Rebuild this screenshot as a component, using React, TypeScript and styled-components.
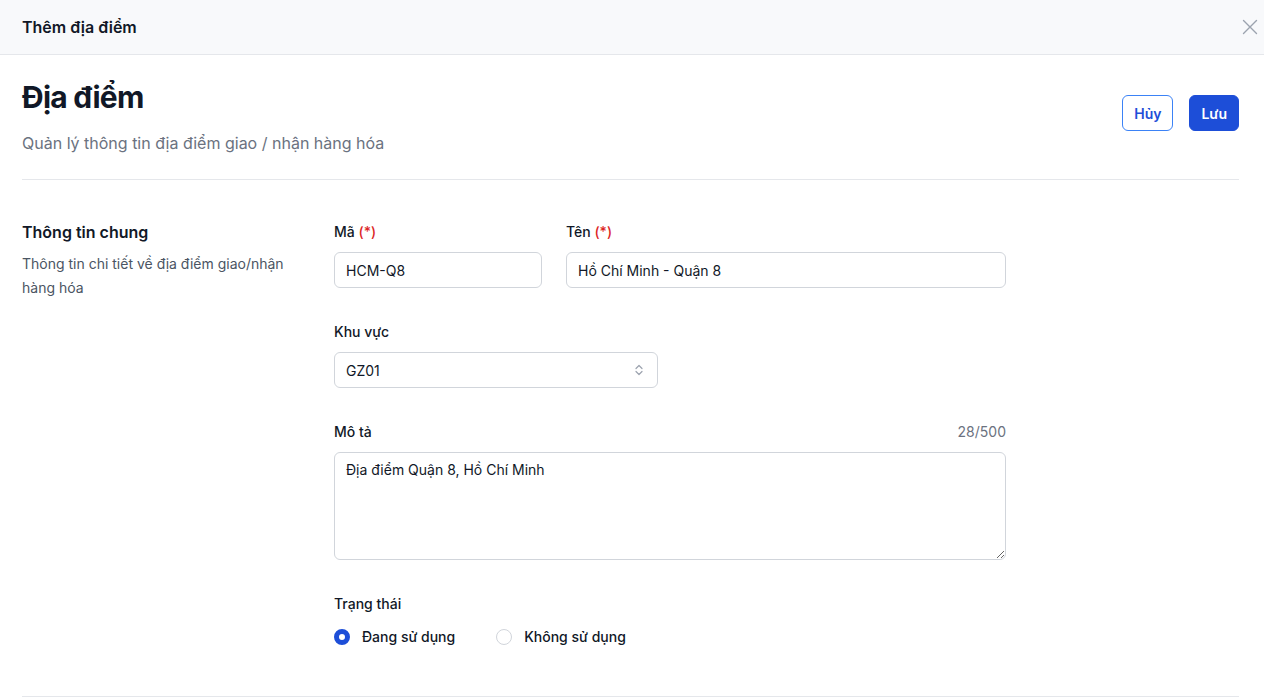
import React from "react";
import styled, { createGlobalStyle } from "styled-components";

const Global = createGlobalStyle`
  html, body { margin: 0; padding: 0; background: #ffffff; }
  body { font-family: Inter, "Noto Sans", sans-serif; color: #111827; }
  * { box-sizing: border-box; }
`;

const Page = styled.div`
  width: 1264px;
  height: 697px;
  overflow: hidden;
  background: #fff;
`;

const TopBar = styled.header`
  height: 55px;
  background: #f8f9fb;
  border-bottom: 1px solid #e5e7eb;
  display: flex;
  align-items: center;
  justify-content: space-between;
  padding: 0 5px 0 22px;
`;

const TopTitle = styled.h2`
  margin: 0;
  font-size: 16px;
  font-weight: 600;
  color: #111827;
`;

const CloseBtn = styled.button`
  width: 18px;
  height: 18px;
  border: none;
  background: transparent;
  padding: 0;
  display: flex;
  align-items: center;
  justify-content: center;
  color: #9ca3af;
  cursor: pointer;
`;

const Body = styled.main`
  padding: 0 25px 0 22px;
`;

const Head = styled.section`
  display: flex;
  justify-content: space-between;
  align-items: flex-start;
  padding: 24px 0 24px;
  border-bottom: 1px solid #e5e7eb;
`;

const Title = styled.h1`
  margin: 0;
  font-size: 30px;
  line-height: 36px;
  font-weight: 700;
  color: #111827;
  letter-spacing: -0.75px;
`;

const Subtitle = styled.p`
  margin: 16px 0 0;
  font-size: 16px;
  line-height: 24px;
  color: #6b7280;
`;

const Actions = styled.div`
  display: flex;
  gap: 16px;
  margin-top: 16px;
`;

const Button = styled.button<{ $primary?: boolean }>`
  height: 36px;
  padding: 0 11px;
  border-radius: 6px;
  font-family: inherit;
  font-size: 14px;
  font-weight: 600;
  cursor: pointer;
  border: 1px solid ${(p) => (p.$primary ? "#1d4ed8" : "#3b82f6")};
  background: ${(p) => (p.$primary ? "#1d4ed8" : "#ffffff")};
  color: ${(p) => (p.$primary ? "#ffffff" : "#1d4ed8")};
`;

const Section = styled.section`
  display: grid;
  grid-template-columns: 280px 672px;
  column-gap: 32px;
  padding: 42px 0 0;
  height: 517px;
  border-bottom: 1px solid #e5e7eb;
`;

const SectionTitle = styled.h3`
  margin: 0;
  font-size: 16px;
  line-height: 20px;
  font-weight: 600;
  color: #111827;
`;

const SectionDesc = styled.p`
  margin: 10px 0 0;
  font-size: 14px;
  line-height: 24px;
  color: #4b5563;
`;

const Form = styled.div`
  display: flex;
  flex-direction: column;
  gap: 34px;
`;

const Row = styled.div<{ $cols?: number }>`
  display: grid;
  grid-template-columns: repeat(${(p) => p.$cols ?? 3}, 1fr);
  column-gap: 24px;
`;

const Field = styled.div<{ $span?: number }>`
  grid-column: span ${(p) => p.$span ?? 1};
  display: flex;
  flex-direction: column;
`;

const LabelLine = styled.div`
  display: flex;
  justify-content: space-between;
  margin-bottom: 10px;
`;

const Label = styled.label`
  font-size: 14px;
  line-height: 20px;
  font-weight: 500;
  color: #111827;
`;

const Req = styled.span`
  color: #dc2626;
`;

const Counter = styled.span`
  font-size: 14px;
  line-height: 20px;
  color: #6b7280;
`;

const Input = styled.input`
  height: 36px;
  width: 100%;
  border: 1px solid #d1d5db;
  border-radius: 6px;
  padding: 0 12px 0 11px;
  font-family: inherit;
  font-size: 14px;
  color: #111827;
  background: #fff;
  outline: none;
`;

const SelectBox = styled.div`
  height: 36px;
  border: 1px solid #d1d5db;
  border-radius: 6px;
  padding: 0 12px 0 11px;
  display: flex;
  align-items: center;
  justify-content: space-between;
  font-size: 14px;
  color: #111827;
`;

const TextArea = styled.textarea`
  height: 108px;
  width: 100%;
  border: 1px solid #d1d5db;
  border-radius: 6px;
  padding: 7px 12px 8px 11px;
  font-family: inherit;
  font-size: 14px;
  line-height: 20px;
  color: #111827;
  resize: vertical;
  outline: none;
`;

const Radios = styled.div`
  display: flex;
  gap: 41px;
  margin-top: 4px;
`;

const RadioItem = styled.label`
  display: flex;
  align-items: center;
  gap: 12px;
  font-size: 14px;
  font-weight: 500;
  color: #111827;
`;

const RadioDot = styled.span<{ $on?: boolean }>`
  width: 16px;
  height: 16px;
  border-radius: 50%;
  border: ${(p) => (p.$on ? "5px solid #1d4ed8" : "1px solid #d1d5db")};
  background: #fff;
`;

export default function App() {
  return (
    <Page>
      <Global />
      <TopBar>
        <TopTitle>Thêm địa điểm</TopTitle>
        <CloseBtn aria-label="close">
          <svg width="16" height="16" viewBox="0 0 16 16" fill="none" stroke="currentColor" strokeWidth="1.4" strokeLinecap="round">
            <path d="M1.5 1.5L14.5 14.5M14.5 1.5L1.5 14.5" />
          </svg>
        </CloseBtn>
      </TopBar>
      <Body>
        <Head>
          <div>
            <Title>Địa điểm</Title>
            <Subtitle>Quản lý thông tin địa điểm giao / nhận hàng hóa</Subtitle>
          </div>
          <Actions>
            <Button>Hủy</Button>
            <Button $primary>Lưu</Button>
          </Actions>
        </Head>
        <Section>
          <div>
            <SectionTitle>Thông tin chung</SectionTitle>
            <SectionDesc>Thông tin chi tiết về địa điểm giao/nhận hàng hóa</SectionDesc>
          </div>
          <Form>
            <Row>
              <Field>
                <LabelLine>
                  <Label>
                    Mã <Req>(*)</Req>
                  </Label>
                </LabelLine>
                <Input defaultValue="HCM-Q8" />
              </Field>
              <Field $span={2}>
                <LabelLine>
                  <Label>
                    Tên <Req>(*)</Req>
                  </Label>
                </LabelLine>
                <Input defaultValue="Hồ Chí Minh - Quận 8" />
              </Field>
            </Row>
            <Row $cols={2}>
              <Field>
                <LabelLine>
                  <Label>Khu vực</Label>
                </LabelLine>
                <SelectBox>
                  <span>GZ01</span>
                  <svg width="12" height="16" viewBox="0 0 12 16" fill="none" stroke="#9ca3af" strokeWidth="1.2" strokeLinecap="round" strokeLinejoin="round">
                    <path d="M3 6.5L6 3.5L9 6.5M3 9.5L6 12.5L9 9.5" />
                  </svg>
                </SelectBox>
              </Field>
            </Row>
            <Row $cols={1}>
              <Field>
                <LabelLine>
                  <Label>Mô tả</Label>
                  <Counter>28/500</Counter>
                </LabelLine>
                <TextArea defaultValue="Địa điểm Quận 8, Hồ Chí Minh" />
              </Field>
            </Row>
            <Row $cols={1}>
              <Field>
                <LabelLine>
                  <Label>Trạng thái</Label>
                </LabelLine>
                <Radios>
                  <RadioItem>
                    <RadioDot $on />
                    Đang sử dụng
                  </RadioItem>
                  <RadioItem>
                    <RadioDot />
                    Không sử dụng
                  </RadioItem>
                </Radios>
              </Field>
            </Row>
          </Form>
        </Section>
      </Body>
    </Page>
  );
}
